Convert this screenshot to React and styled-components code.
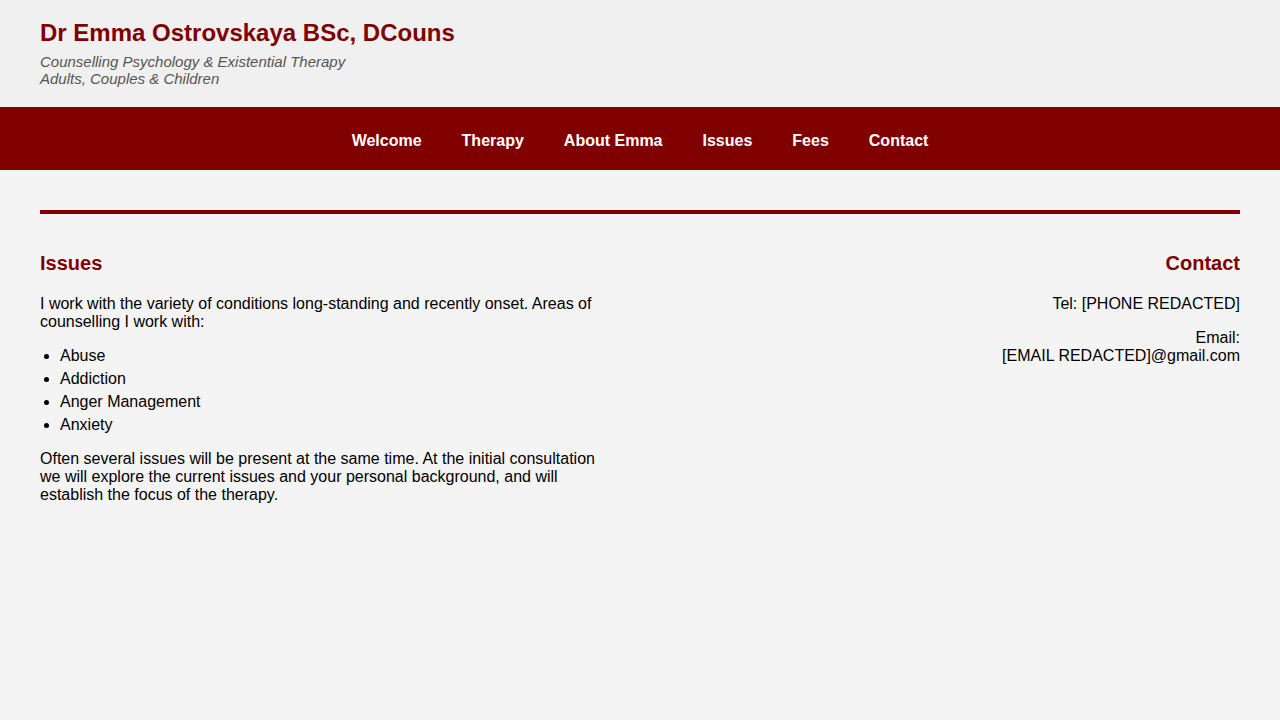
import styled, { createGlobalStyle } from 'styled-components';

const GlobalStyle = createGlobalStyle`
    html, body {
        margin: 0;
        padding: 0;
        background: #f4f4f4;
        font-family: "Liberation Sans", Arial, sans-serif;
        color: #000;
    }
`;

const Header = styled.header`
    background: #f0f0f0;
    padding: 19px 40px 20px 40px;

    h1 {
        margin: 0 0 6px 0;
        font-size: 24px;
        line-height: 27.6px;
        font-weight: bold;
        color: #800000;
    }

    .tagline {
        margin: 0;
        font-size: 15px;
        line-height: 17.25px;
        font-style: italic;
        color: #555;
    }
`;

const Nav = styled.nav`
    background: #800000;
    display: flex;
    justify-content: center;
    gap: 40px;
    padding: 24px 0 20px 0;

    a {
        color: white;
        font-weight: bold;
        font-size: 16px;
        line-height: 19px;
        text-decoration: none;
    }
`;

const Main = styled.main`
    padding: 40px;
`;

const Rule = styled.div`
    height: 4px;
    background: #800000;
`;

const Columns = styled.div`
    display: grid;
    grid-template-columns: 1fr 1fr;
    column-gap: 80px;
    margin-top: 38px;
`;

const Section = styled.section`
    text-align: ${(props) => (props.$right ? 'right' : 'left')};

    h3 {
        margin: 0 0 20px 0;
        font-size: 20px;
        line-height: 23px;
        color: #800000;
    }

    p {
        margin: 0 0 12px 0;
        font-size: 16px;
        line-height: 18px;
    }

    ul {
        margin: 13px 0 14px 0;
        padding-left: 20px;

        li {
            font-size: 16px;
            line-height: 23px;
        }
    }

    .line {
        display: block;
    }
`;

const issues = ['Abuse', 'Addiction', 'Anger Management', 'Anxiety'];

function App() {
    return (
        <>
            <GlobalStyle />
            <Header>
                <h1>Dr Emma Ostrovskaya BSc, DCouns</h1>
                <p className='tagline'>Counselling Psychology &amp; Existential Therapy</p>
                <p className='tagline'>Adults, Couples &amp; Children</p>
            </Header>
            <Nav>
                <a href='#'>Welcome</a>
                <a href='#'>Therapy</a>
                <a href='#'>About Emma</a>
                <a href='#'>Issues</a>
                <a href='#'>Fees</a>
                <a href='#'>Contact</a>
            </Nav>
            <Main>
                <Rule />
                <Columns>
                    <Section>
                        <h3>Issues</h3>
                        <p>I work with the variety of conditions long-standing and recently onset. Areas of counselling I work with:</p>
                        <ul>
                            {issues.map((item) => <li key={item}>{item}</li>)}
                        </ul>
                        <p>Often several issues will be present at the same time. At the initial consultation we will explore the current issues and your personal background, and will establish the focus of the therapy.</p>
                    </Section>
                    <Section $right>
                        <h3>Contact</h3>
                        <p>Tel: [PHONE REDACTED]</p>
                        <p style={{ marginTop: 16 }}>
                            <span className='line'>Email:</span>
                            <span className='line'>[EMAIL REDACTED]@gmail.com</span>
                        </p>
                    </Section>
                </Columns>
            </Main>
        </>
    );
}

export default App;
